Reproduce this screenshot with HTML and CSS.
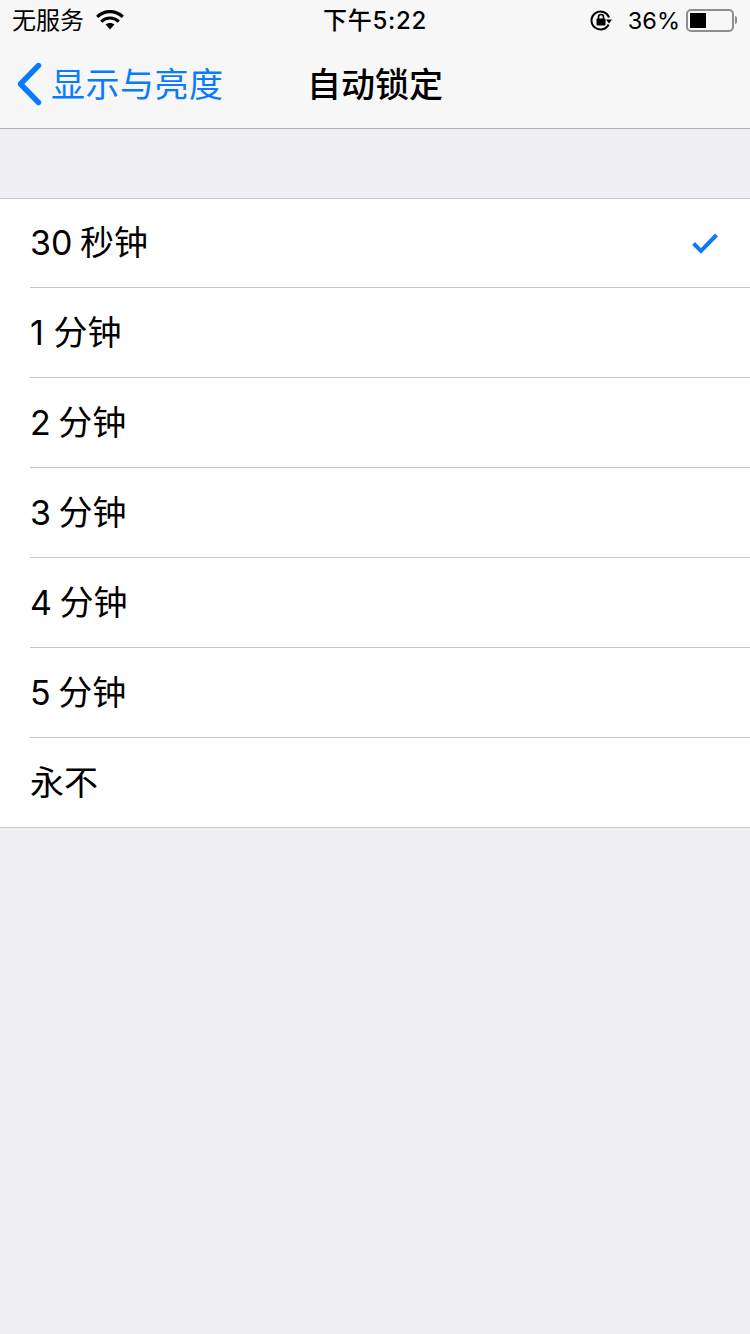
FILE: index.html
```html
<!DOCTYPE html>
<html lang="zh-CN">
<head>
    <meta charset="UTF-8">
    <meta name="viewport" content="width=device-width, initial-scale=1.0">
    <title>自动锁定</title>
    <link rel="stylesheet" href="styles.css">
</head>
<body>
    <div class="top-bar">
        <div class="status-bar">
            <div class="status-left">
                <span class="carrier">无服务</span>
                <svg class="wifi-icon" width="28" height="20" viewBox="0 0 28 20">
                    <path d="M14 19.5 L9.6 14.4 C12.2 12.4 15.8 12.4 18.4 14.4 Z" fill="#000"/>
                    <path d="M5.2 11.6 C10.4 6.8 17.6 6.8 22.8 11.6" fill="none" stroke="#000" stroke-width="3.2"/>
                    <path d="M1.2 6.8 C8.6 -0.2 19.4 -0.2 26.8 6.8" fill="none" stroke="#000" stroke-width="3.2"/>
                </svg>
            </div>
            <div class="status-time">下午5:22</div>
            <div class="status-right">
                <svg class="lock-icon" width="24" height="24" viewBox="0 0 24 24">
                    <path d="M20 9.5 A9 9 0 1 0 19.6 16.5" fill="none" stroke="#000" stroke-width="2"/>
                    <path d="M17 11.5 H23 L20 15.5 Z" fill="#000"/>
                    <rect x="7.5" y="10.5" width="9" height="7" rx="1" fill="#000"/>
                    <path d="M9.5 11 V9 A2.5 2.5 0 0 1 14.5 9 V11" fill="none" stroke="#000" stroke-width="1.6"/>
                </svg>
                <span class="battery-text">36%</span>
                <div class="battery">
                    <div class="battery-body"><div class="battery-level"></div></div>
                    <div class="battery-tip"></div>
                </div>
            </div>
        </div>
        <div class="nav-bar">
            <div class="nav-back">
                <svg class="back-icon" width="26" height="44" viewBox="0 0 26 44">
                    <path d="M22.5 3.5 L4.5 22 L22.5 40.5" fill="none" stroke="#0a7aff" stroke-width="5.4" stroke-linecap="round" stroke-linejoin="round"/>
                </svg>
                <span class="back-text">显示与亮度</span>
            </div>
            <div class="nav-title">自动锁定</div>
        </div>
    </div>

    <ul class="option-list">
        <li class="option-row">
            <span class="option-label tight">30 秒钟</span>
            <svg class="check-icon" width="28" height="22" viewBox="0 0 28 22">
                <path d="M2.5 11.5 L10 19 L25.5 3" fill="none" stroke="#0a7aff" stroke-width="4"/>
            </svg>
        </li>
        <li class="option-row"><span class="option-label">1 分钟</span></li>
        <li class="option-row"><span class="option-label tight">2 分钟</span></li>
        <li class="option-row"><span class="option-label tight">3 分钟</span></li>
        <li class="option-row"><span class="option-label tight">4 分钟</span></li>
        <li class="option-row"><span class="option-label tight">5 分钟</span></li>
        <li class="option-row"><span class="option-label">永不</span></li>
    </ul>
</body>
</html>
```

FILE: styles.css
```css
body {
    margin: 0;
    height: 1334px;
    overflow: hidden;
    background: #efeff4;
    color: #000;
    font-family: Inter, "Noto Sans CJK SC", sans-serif;
}

.top-bar {
    height: 128px;
    background: #f7f7f7;
    border-bottom: 1px solid #b2b2b6;
}

.status-bar {
    height: 40px;
    display: grid;
    grid-template-columns: 1fr auto 1fr;
    align-items: center;
    padding: 0 12px 0 12px;
    font-size: 24px;
}

.status-left {
    display: flex;
    align-items: center;
    gap: 12px;
}

.carrier {
    margin-top: -3px;
}

.wifi-icon {
    margin-top: -1px;
}

.status-time {
    margin-top: -3px;
    font-weight: 500;
    letter-spacing: 0.7px;
}

.status-right {
    display: flex;
    align-items: center;
    justify-content: flex-end;
}

.lock-icon {
    margin-right: 15px;
}

.battery-text {
    margin-right: 6px;
    font-size: 23.5px;
}

.battery {
    display: flex;
    align-items: center;
    margin-right: 1px;
}

.battery-body {
    width: 48px;
    height: 23px;
    box-sizing: border-box;
    border: 2px solid #8e8e8e;
    border-radius: 5px;
    padding: 2px;
}

.battery-level {
    width: 16px;
    height: 100%;
    background: #000;
}

.battery-tip {
    width: 2px;
    height: 8px;
    margin-left: 1px;
    background: #8e8e8e;
    border-radius: 0 2px 2px 0;
}

.nav-bar {
    height: 88px;
    display: flex;
    align-items: center;
    justify-content: center;
    position: relative;
}

.nav-back {
    position: absolute;
    left: 16px;
    top: 0;
    height: 88px;
    display: flex;
    align-items: center;
    gap: 9px;
    color: #0a7aff;
    font-size: 34px;
}

.back-text {
    margin-top: -4px;
    letter-spacing: 0.5px;
}

.nav-title {
    margin-top: -4px;
    font-size: 34px;
    font-weight: 500;
}

.option-list {
    list-style: none;
    margin: 69px 0 0;
    padding: 0;
    background: #fff;
    border-top: 1px solid #c8c7cc;
    border-bottom: 1px solid #c8c7cc;
}

.option-row {
    height: 89px;
    margin-left: 30px;
    padding-right: 31px;
    display: flex;
    align-items: center;
    justify-content: space-between;
    border-bottom: 1px solid #c8c7cc;
    font-size: 34px;
}

.option-row:first-child {
    height: 88px;
}

.option-row:first-child .option-label {
    margin-top: -6px;
}

.option-row:last-child {
    border-bottom: none;
}

.option-label {
    margin-top: -4px;
}

.tight {
    word-spacing: -2px;
}
```
